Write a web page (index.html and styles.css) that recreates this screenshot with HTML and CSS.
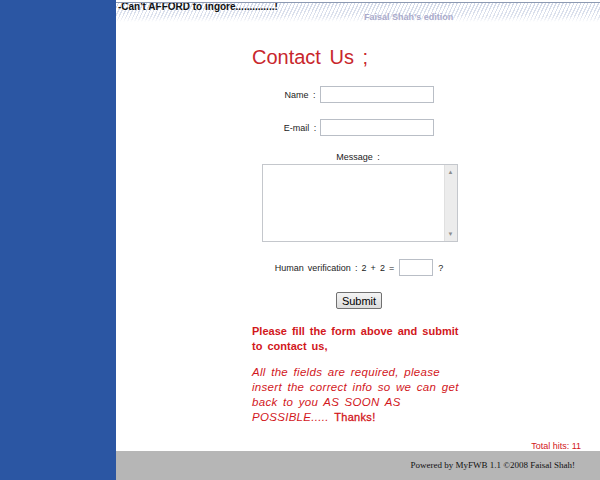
FILE: index.html
```html
<!DOCTYPE html>
<html>
<head>
<meta charset="utf-8">
<title>Contact Us</title>
<link rel="stylesheet" href="styles.css">
</head>
<body>
<div class="page">
  <div class="side"></div>
  <div class="main">
    <div class="header">
      <div class="slogan">-Can't AFFORD to ingore..............!</div>
      <div class="edition">Faisal Shah's edition</div>
    </div>
    <div class="content">
      <div class="block">
        <h1 class="title">Contact Us ;</h1>
      </div>
      <div class="row row-name">
        <span class="label">Name :</span>
        <input class="field" type="text">
      </div>
      <div class="row row-email">
        <span class="label">E-mail :</span>
        <input class="field" type="text">
      </div>
      <div class="msg-label">Message :</div>
      <div class="textbox">
        <textarea class="msg"></textarea>
        <div class="scroll"><span class="arr">&#9650;</span><span class="arr">&#9660;</span></div>
      </div>
      <div class="row row-human">
        <span class="label hv">Human verification : 2 + 2 =</span>
        <input class="small" type="text">
        <span class="label q">?</span>
      </div>
      <div class="row row-submit">
        <button class="btn" type="button">Submit</button>
      </div>
      <div class="block notes">
        <p class="note1">Please fill the form above and submit<br>to contact us,</p>
        <p class="note2">All the fields are required, please<br>insert the correct info so we can get<br>back to you AS SOON AS<br>POSSIBLE..... <span class="thanks">Thanks!</span></p>
      </div>
      <div class="hits">Total hits: 11</div>
    </div>
    <div class="footer">Powered by MyFWB 1.1 &copy;2008 Faisal Shah!</div>
  </div>
</div>
</body>
</html>
```
FILE: styles.css
```css
html, body {
  margin: 0;
  padding: 0;
  background: #fff;
}
.page {
  display: grid;
  grid-template-columns: 116px 1fr;
  width: 600px;
  height: 480px;
  overflow: hidden;
}
.side {
  background: #2b56a3;
}
.main {
  display: flex;
  flex-direction: column;
  font-family: "Liberation Sans", Arial, sans-serif;
}
.header {
  height: 22px;
  position: relative;
  border-top: 2px solid #fff;
  background:
    linear-gradient(to bottom, rgba(255,255,255,0) 0%, rgba(255,255,255,0.25) 70%, #fff 100%),
    repeating-linear-gradient(115deg, #fff 0px, #fff 2px, #d2d9e8 2px, #d2d9e8 3.2px);
  box-sizing: border-box;
}
.header::before {
  content: "";
  position: absolute;
  left: 0; right: 0; top: 0;
  height: 1px;
  background: #8d9ab2;
}
.slogan {
  font-weight: bold;
  font-size: 10px;
  line-height: 10px;
  color: #111;
  padding-left: 2px;
}
.edition {
  font-size: 9px;
  font-weight: bold;
  line-height: 10px;
  color: #aaaacb;
  margin-left: 248px;
}
.content {
  flex: 1;
  display: flex;
  flex-direction: column;
  align-items: center;
}
.block {
  width: 212px;
}
.title {
  margin: 23px 0 0 0;
  font-weight: normal;
  font-size: 20px;
  line-height: 24px;
  color: #c8262c;
  word-spacing: 3px;
}
.row {
  display: flex;
  align-items: center;
  height: 17px;
}
.row-name { margin-top: 17px; margin-left: 2px; }
.row-email { margin-top: 16px; margin-left: 2px; }
.row-human { margin-top: 17px; margin-left: 2px; }
.row-submit { margin-top: 16px; margin-left: 2px; }
.label {
  font-size: 9px;
  color: #222;
  word-spacing: 2px;
  margin-right: 4px;
}
.hv { word-spacing: 1.6px; margin-right: 5px; }
.q { margin-left: 5px; margin-right: 0; }
.field {
  width: 114px;
  height: 17px;
  box-sizing: border-box;
  border: 1px solid #b9bec6;
  padding: 0;
  margin: 0;
}
.small {
  width: 34px;
  height: 17px;
  box-sizing: border-box;
  border: 1px solid #b9bec6;
  padding: 0;
  margin: 0;
}
.msg-label {
  margin-top: 15px;
  font-size: 9px;
  line-height: 12px;
  color: #222;
  word-spacing: 2px;
}
.textbox {
  margin-top: 1px;
  margin-left: 3px;
  width: 196px;
  height: 78px;
  box-sizing: border-box;
  border: 1px solid #c4c7cc;
  display: flex;
}
.msg {
  flex: 1;
  border: 0;
  padding: 0;
  margin: 0;
  resize: none;
  outline: none;
}
.scroll {
  width: 12px;
  background: #ececec;
  border-left: 1px solid #e0e0e0;
  display: flex;
  flex-direction: column;
  justify-content: space-between;
  align-items: center;
  padding: 3px 0;
}
.arr {
  font-size: 6px;
  line-height: 8px;
  color: #8c8c8c;
}
.btn {
  width: 46px;
  height: 17px;
  padding: 0;
  font-family: "Liberation Sans", Arial, sans-serif;
  font-size: 11px;
  color: #000;
  border: 1px solid #707070;
  border-radius: 2px;
  background: linear-gradient(#f4f4f4, #dcdcdc);
}
.notes {
  margin-top: 15px;
  color: #d2171c;
  font-size: 11px;
  line-height: 15px;
  word-spacing: 2px;
}
.notes p { margin: 0; white-space: nowrap; }
.note1 {
  font-weight: bold;
}
.note2 {
  margin-top: 11px !important;
  font-style: italic;
  font-size: 11.5px;
  letter-spacing: 0.3px;
}
.thanks {
  font-style: normal;
  font-weight: normal;
  font-size: 11px;
  letter-spacing: 0.3px;
  -webkit-text-stroke: 0.3px #d2171c;
}
.hits {
  margin-top: auto;
  align-self: flex-end;
  margin-right: 19px;
  font-size: 9px;
  line-height: 12px;
  color: #d2171c;
  margin-bottom: -1px;
}
.footer {
  height: 29px;
  background: #b6b6b6;
  font-family: "Liberation Serif", "Times New Roman", serif;
  font-size: 9px;
  line-height: 29px;
  color: #111;
  text-align: right;
  padding-right: 25px;
}
```
